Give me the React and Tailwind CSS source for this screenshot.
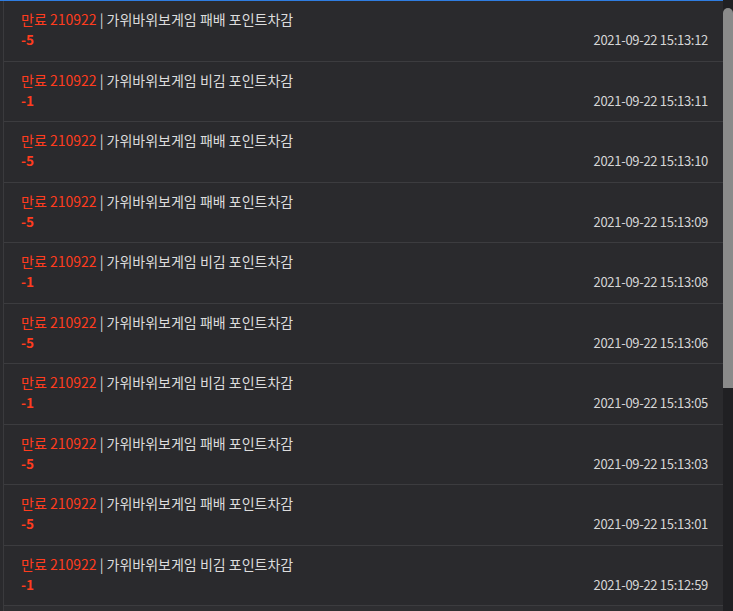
const rows = [
  { type: "패배", pt: "-5", time: "2021-09-22 15:13:12" },
  { type: "비김", pt: "-1", time: "2021-09-22 15:13:11" },
  { type: "패배", pt: "-5", time: "2021-09-22 15:13:10" },
  { type: "패배", pt: "-5", time: "2021-09-22 15:13:09" },
  { type: "비김", pt: "-1", time: "2021-09-22 15:13:08" },
  { type: "패배", pt: "-5", time: "2021-09-22 15:13:06" },
  { type: "비김", pt: "-1", time: "2021-09-22 15:13:05" },
  { type: "패배", pt: "-5", time: "2021-09-22 15:13:03" },
  { type: "패배", pt: "-5", time: "2021-09-22 15:13:01" },
  { type: "비김", pt: "-1", time: "2021-09-22 15:12:59" },
];

export default function App() {
  return (
    <div
      className="w-[733px] h-[611px] overflow-hidden bg-[#2a2a2d] flex text-[13px]"
      style={{ fontFamily: '"Noto Sans CJK KR", "Noto Sans", sans-serif' }}
    >
      {/* list */}
      <div className="flex-1 flex flex-col border-t border-[#2f7de1] pl-[3px]">
        <div className="flex-1 border-l border-[#3a3a3d] flex flex-col">
          {rows.map((r, i) => (
            <div
              key={i}
              className="h-[60.5px] shrink-0 border-b border-[#3c3c3f] pl-[17px] pr-[15px] pt-[7px] flex flex-col"
            >
              <div className="leading-[22px] text-[14px] text-[#dcdcdc]">
                <span className="text-[#ff3c1e]">만료 210922</span> | 가위바위보게임 {r.type} 포인트차감
              </div>
              <div className="flex justify-between items-baseline leading-[18px]">
                <span className="text-[#ff3c1e] font-bold text-[13.5px]">{r.pt}</span>
                <span className="text-[#d6d6d6] text-[13px] tracking-[-0.3px]">{r.time}</span>
              </div>
            </div>
          ))}
          <div className="flex-1 bg-[#2e2e31]" />
        </div>
      </div>
      {/* scrollbar */}
      <div className="w-[10px] bg-[#202023] pt-[8px] flex flex-col">
        <div className="h-[380px] bg-[#8a8a8a] rounded-t-full rounded-b-[3px]" />
      </div>
    </div>
  );
}
